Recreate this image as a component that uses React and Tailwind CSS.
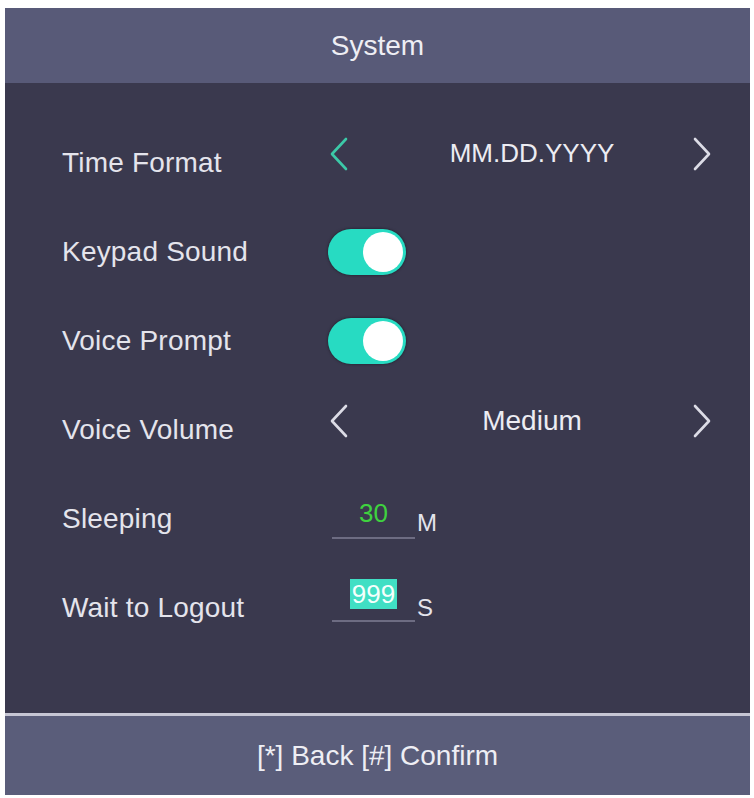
import React from "react";

const font = { fontFamily: '"Liberation Sans", Arial, sans-serif' };

function Chevron({ dir = "left", active = false }) {
  const points = dir === "left" ? "18,2 4,17 18,32" : "5,2 19,17 5,32";
  return (
    <svg width="24" height="34" viewBox="0 0 24 34" className="shrink-0">
      <polyline
        points={points}
        fill="none"
        stroke={active ? "#3cc9a8" : "#dcdce6"}
        strokeWidth="2.6"
        strokeLinecap="round"
        strokeLinejoin="round"
      />
    </svg>
  );
}

function Toggle() {
  return (
    <div className="flex h-[46px] w-[78px] items-center justify-end rounded-full bg-[#27dbc2] pr-[3px] shadow-[0_0_3px_rgba(0,0,0,0.5)]">
      <div className="h-[40px] w-[40px] rounded-full bg-white" />
    </div>
  );
}

function Row({ label, children }) {
  return (
    <div className="flex h-[89px] items-center">
      <div className="w-[266px] shrink-0 text-[28px] tracking-[0.2px] text-[#e4e4ec]">{label}</div>
      <div className="flex flex-1 items-center">{children}</div>
    </div>
  );
}

function Picker({ value, active, size = "text-[28px]" }) {
  return (
    <div className="mb-[18px] flex w-[386px] items-center">
      <Chevron dir="left" active={active} />
      <div className={`flex-1 pl-[22px] text-center text-[#ececf2] ${size}`}>{value}</div>
      <Chevron dir="right" />
    </div>
  );
}

export default function App() {
  return (
    <div className="h-[798px] w-[754px] bg-white pl-[5px] pt-[8px]" style={font}>
      <div className="flex h-[787px] w-[745px] flex-col">
        <div className="flex h-[75px] items-center justify-center bg-[#585a78] text-[28px] text-[#eeeef4]">
          System
        </div>

        <div className="flex-1 bg-[#3a394e] pl-[57px] pt-[35px]">
          <Row label="Time Format">
            <Picker value="MM.DD.YYYY" active size="text-[26px]" />
          </Row>
          <Row label="Keypad Sound">
            <Toggle />
          </Row>
          <Row label="Voice Prompt">
            <Toggle />
          </Row>
          <Row label="Voice Volume">
            <Picker value="Medium" />
          </Row>
          <Row label="Sleeping">
            <div className="ml-[4px] flex items-end">
              <div className="w-[83px] border-b-2 border-[#6d6c82] pb-[10px] text-center text-[26px] leading-[28px] text-[#3fd23f]">
                30
              </div>
              <span className="mb-[4px] ml-[2px] text-[24px] leading-[24px] text-[#e4e4ec]">M</span>
            </div>
          </Row>
          <Row label="Wait to Logout">
            <div className="mb-[14px] ml-[4px] flex items-end">
              <div className="w-[83px] border-b-2 border-[#6d6c82] pb-[10px] text-center">
                <span className="inline-block h-[30px] bg-[#40dfc4] px-[2px] text-[26px] leading-[30px] text-[#f4fffc]">
                  999
                </span>
              </div>
              <span className="mb-[2px] ml-[2px] text-[24px] leading-[24px] text-[#e4e4ec]">S</span>
            </div>
          </Row>
        </div>

        <div className="h-[3px] bg-[#c6c6d4]" />
        <div className="flex h-[79px] items-center justify-center bg-[#5a5d7a] text-[28px] text-[#eeeef4]">
          [*] Back [#] Confirm
        </div>
      </div>
    </div>
  );
}
